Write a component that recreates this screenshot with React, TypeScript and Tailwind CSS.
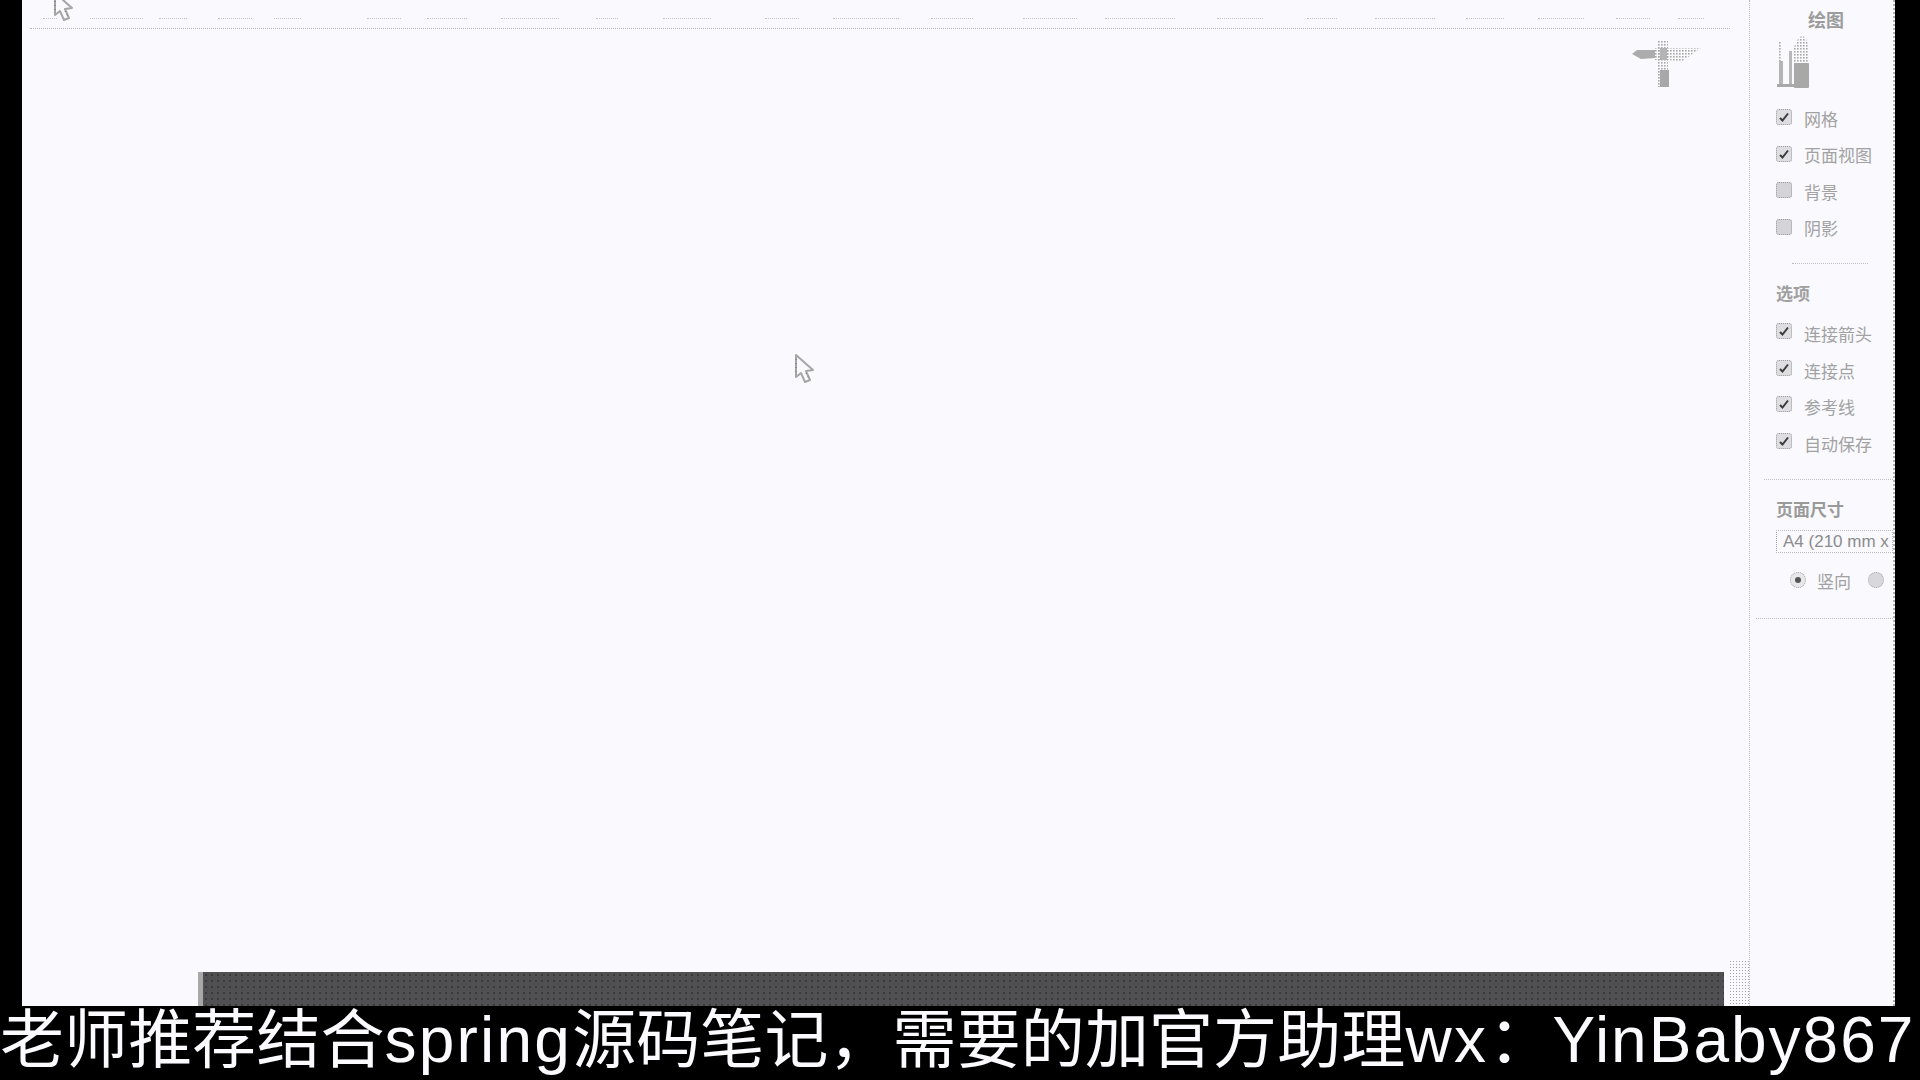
const topSegments: [number, number][] = [
  [14, 14], [37, 53], [4, 28], [35, 34], [16, 27], [104, 34], [24, 40], [40, 58], [46, 22], [62, 48], [80, 34], [40, 66], [36, 42], [72, 54], [28, 70], [56, 46], [60, 30], [48, 60], [34, 38], [40, 46], [36, 34], [28, 26],
];

function Cursor({ className }: { className: string }) {
  return (
    <svg className={className} width="22" height="32" viewBox="0 0 22 32" fill="none">
      <path d="M2 2 L2 24 L7 20 L11 29 L16 27 L12 18 L19 17 Z" fill="#f9f9fe" stroke="#a6a6a6" strokeWidth="2" strokeLinejoin="round" />
      <path d="M2 6 V22 M12 20 L15 26" stroke="#707070" strokeWidth="1" strokeDasharray="1 3" />
    </svg>
  );
}

function Check({ on }: { on: boolean }) {
  return (
    <span className={`flex h-4 w-4 shrink-0 items-center justify-center rounded-[3px] border border-dotted border-[#9c9c9c] ${on ? "bg-[#dedee2]" : "bg-[#d4d4d8]"}`}>
      {on && (
        <svg width="12" height="12" viewBox="0 0 12 12" fill="none">
          <path d="M2 7 L4.5 9.5 L10 2.5" stroke="#3c3c3c" strokeWidth="2" />
        </svg>
      )}
    </span>
  );
}

function Row({ label, on, low }: { label: string; on: boolean; low?: boolean }) {
  return (
    <div className="flex h-[36.5px] items-center gap-3">
      <Check on={on} />
      <span className={`${low ? "mt-[9px]" : "mt-[6px]"} text-[17px] leading-none text-[#a2a2a2]`}>{label}</span>
    </div>
  );
}

function Divider({ className }: { className: string }) {
  return <div className={`border-t border-dotted border-[#c0c0c0] ${className}`} />;
}

function Arrange() {
  return (
    <svg className="mt-[3px] block" width="36" height="56" viewBox="0 0 36 56">
      <defs>
        <pattern id="dot" width="3" height="3" patternUnits="userSpaceOnUse">
          <rect width="1.6" height="1.6" fill="#a8a8a8" />
        </pattern>
      </defs>
      <rect x="2" y="8" width="3" height="46" fill="url(#dot)" />
      <rect x="3" y="28" width="4" height="26" fill="#b4b4b4" />
      <rect x="13" y="18" width="3" height="36" fill="#b8b8b8" />
      <rect x="1" y="51" width="18" height="3" fill="#a8a8a8" />
      <path d="M18 14 Q27 -8 33 14 V34 H18 Z" fill="url(#dot)" />
      <rect x="18" y="30" width="15" height="25" rx="1" fill="#a8a8a8" />
    </svg>
  );
}

function CrossMark() {
  return (
    <svg className="absolute left-[1609px] top-[38px]" width="74" height="50" viewBox="0 0 74 50">
      <defs>
        <pattern id="dot2" width="3" height="3" patternUnits="userSpaceOnUse">
          <rect width="1.6" height="1.6" fill="#a8a8a8" />
        </pattern>
      </defs>
      <path d="M1 16 L6 12 H24 V20 L10 21 Z" fill="#acacac" />
      <path d="M24 10 H70 L50 24 L38 22 H24 Z" fill="url(#dot2)" />
      <path d="M27 2 H37 V49 H27 Z" fill="url(#dot2)" />
      <rect x="29" y="32" width="9" height="17" fill="#a8a8a8" />
      <rect x="29" y="10" width="7" height="12" fill="#b4b4b4" />
    </svg>
  );
}

export default function App() {
  return (
    <div className="flex h-[1080px] w-[1920px] flex-col overflow-hidden bg-black [font-family:'Liberation_Sans','Noto_Sans_CJK_SC',sans-serif]">
      <div className="flex h-[1006px] pl-[22px] pr-[25px]">
        <main className="relative flex w-[1727px] flex-col bg-[#f9f9fe]">
          <div className="flex gap-[14px] pl-[14px] pt-[18px]">
            {topSegments.map(([gap, width], i) => (
              <div key={i} className="border-t border-dotted border-[#c4c4c8]" style={{ marginLeft: gap / 2, width }} />
            ))}
          </div>
          <div className="mt-[9px] ml-[8px] w-[1700px] border-t border-dotted border-[#b4b4b8]" />
          <Cursor className="absolute left-[31px] top-[-9px]" />
          <Cursor className="absolute left-[772px] top-[353px]" />
          <CrossMark />
          <div className="mt-auto flex items-end">
            <div className="ml-[176px] flex h-[34px] w-[1528px]">
              <div className="w-[5px] bg-[#a8a8a8]" />
              <div className="flex-1 bg-[#505052] bg-[radial-gradient(#3a3a3c_1px,transparent_1px)] bg-[length:6px_6px]" />
            </div>
            <div className="ml-[5px] h-[46px] w-[20px] bg-[radial-gradient(#a4a4a4_1px,transparent_1px)] bg-[length:3px_3px]" />
          </div>
        </main>
        <aside className="w-[146px] border-l border-dotted border-r-2 border-l-[#bcbcbc] border-r-[#b0b0b0] bg-[#f9f9fe] pl-[26px]">
          <h2 className="pt-[12px] pl-[32px] text-[18px] font-bold leading-[18px] text-[#9c9c9c]">绘图</h2>
          <Arrange />
          <div className="mt-[10px]">
            <Row label="网格" on />
            <Row label="页面视图" on />
            <Row label="背景" on={false} />
            <Row label="阴影" on={false} />
          </div>
          <Divider className="ml-[16px] mt-[18px] w-[76px]" />
          <h3 className="mt-[22px] text-[17px] font-bold leading-[18px] text-[#a0a0a0]">选项</h3>
          <div className="mt-[9px]">
            <Row label="连接箭头" on low />
            <Row label="连接点" on low />
            <Row label="参考线" on low />
            <Row label="自动保存" on low />
          </div>
          <Divider className="-ml-[12px] mt-[20px]" />
          <h3 className="mt-[22px] text-[17px] font-bold leading-[18px] text-[#9a9a9a]">页面尺寸</h3>
          <div className="mt-[10px] h-[23px] overflow-hidden whitespace-nowrap border border-dotted border-l-[#a0a0a0] border-[#bcbcbc] pl-[6px] text-[17px] leading-[21px] text-[#8c8c8c]">
            A4 (210 mm x
          </div>
          <div className="mt-[15px] flex items-center pl-[14px]">
            <span className="flex h-4 w-4 items-center justify-center rounded-full border border-dotted border-[#a0a0a0] bg-[#e8e8ec]">
              <span className="h-[6px] w-[6px] rounded-full bg-[#555]" />
            </span>
            <span className="ml-[11px] mt-[6px] text-[17px] leading-none text-[#a2a2a2]">竖向</span>
            <span className="ml-[17px] h-4 w-4 rounded-full border border-dotted border-[#a8a8a8] bg-[#d8d8dc]" />
          </div>
          <Divider className="-ml-[20px] mt-[27px]" />
        </aside>
      </div>
      <div className="h-[74px] whitespace-nowrap text-[64px] leading-[68px] tracking-[0.1px] text-[#fafaff]">
        老师推荐结合<span className="tracking-[2.2px]">spring</span>源码笔记，需要的加官方助理<span className="tracking-[2.4px]">wx</span>：<span className="tracking-[2px]">YinBaby867</span>
      </div>
    </div>
  );
}
